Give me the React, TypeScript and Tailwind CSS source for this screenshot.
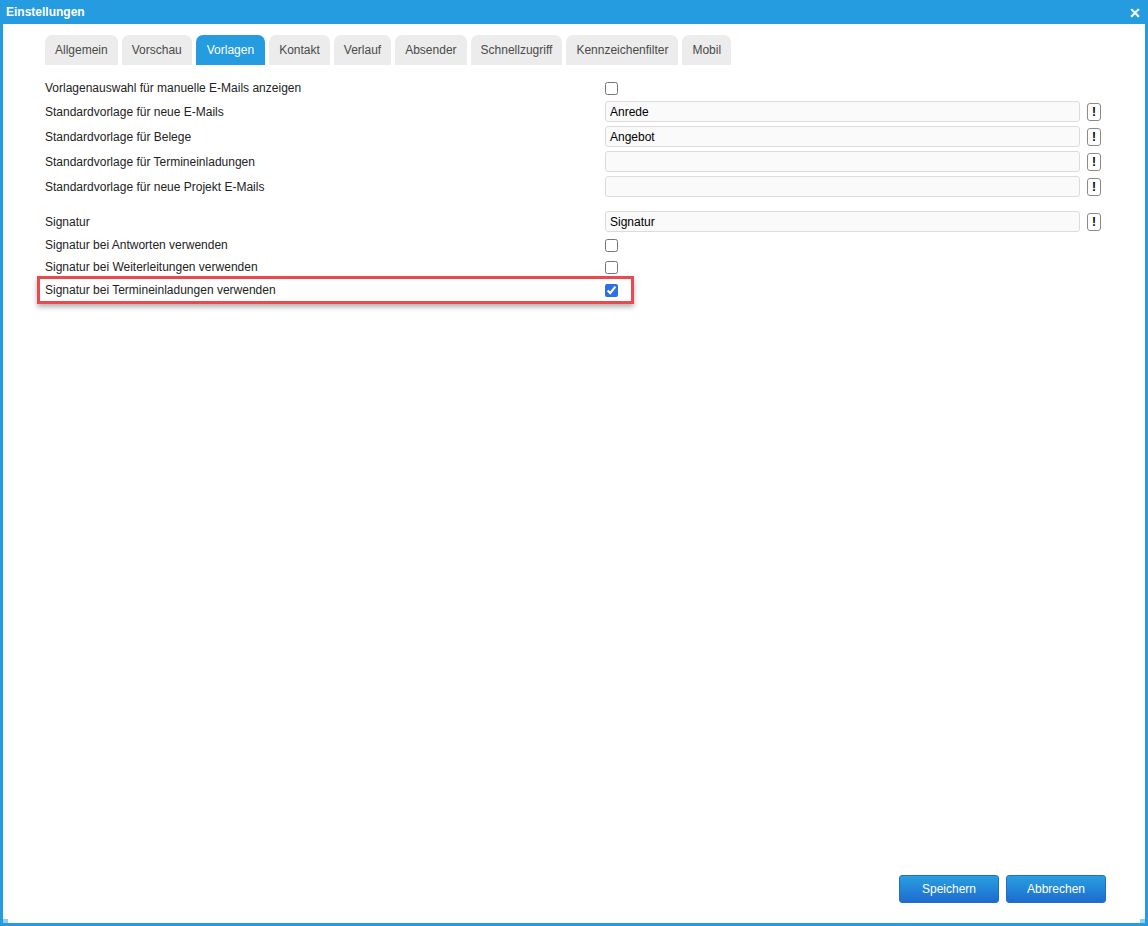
import React from 'react';

const tabs = ['Allgemein', 'Vorschau', 'Vorlagen', 'Kontakt', 'Verlauf', 'Absender', 'Schnellzugriff', 'Kennzeichenfilter', 'Mobil'];

function Check({ checked = false }: { checked?: boolean }) {
  return (
    <input
      type="checkbox"
      readOnly
      checked={checked}
      className="m-0 w-[13px] h-[13px] accent-[#2f6fe4]"
    />
  );
}

function InfoBtn() {
  return (
    <button className="ml-[7px] w-[14px] h-[18px] border border-[#8a8a8a] rounded-[3px] bg-white flex items-center justify-center text-[12px] font-bold text-black leading-none">
      !
    </button>
  );
}

function InputRow({ label, value }: { label: string; value: string }) {
  return (
    <div className="flex items-center h-[25px]">
      <div className="w-[560px]">{label}</div>
      <div className="w-[475px] h-[21px] bg-[#fafafa] border border-[#dcdcdc] rounded-[3px] px-[4px] flex items-center text-black">{value}</div>
      <InfoBtn />
    </div>
  );
}

function CheckRow({ label, checked }: { label: string; checked?: boolean }) {
  return (
    <div className="flex items-center h-[22px]">
      <div className="w-[560px]">{label}</div>
      <Check checked={checked} />
    </div>
  );
}

export default function App() {
  return (
    <div
      className="relative w-[1148px] h-[926px] bg-white border-x-[3px] border-b-[3px] border-[#259be0] flex flex-col text-[12px] text-[#222]"
      style={{ fontFamily: '"Liberation Sans", Arial, sans-serif' }}
    >
      <div className="h-[24px] -mx-[3px] bg-[#259be0] flex items-center justify-between px-[6px] text-white">
        <span className="font-bold text-[12px]">Einstellungen</span>
        <span className="font-bold text-[14px] leading-none mr-[1px] mt-[2px]">✕</span>
      </div>

      <div className="flex-1 flex flex-col pl-[42px]">
        <div className="flex gap-[4px] mt-[11px] h-[30px]">
          {tabs.map((t) => (
            <div
              key={t}
              className={
                t === 'Vorlagen'
                  ? 'px-[11px] flex items-center rounded-t-[7px] bg-[#259be0] text-white'
                  : 'px-[10px] flex items-center rounded-t-[7px] bg-[#ececec] text-[#4a4a4a]'
              }
            >
              {t}
            </div>
          ))}
        </div>

        <div className="mt-[12px] flex flex-col">
          <CheckRow label="Vorlagenauswahl für manuelle E-Mails anzeigen" />
          <InputRow label="Standardvorlage für neue E-Mails" value="Anrede" />
          <InputRow label="Standardvorlage für Belege" value="Angebot" />
          <InputRow label="Standardvorlage für Termineinladungen" value="" />
          <InputRow label="Standardvorlage für neue Projekt E-Mails" value="" />
          <div className="h-[10px]" />
          <InputRow label="Signatur" value="Signatur" />
          <CheckRow label="Signatur bei Antworten verwenden" />
          <CheckRow label="Signatur bei Weiterleitungen verwenden" />
          <div className="-ml-[8px] -mt-[2px] w-[597px] h-[28px] pl-[5px] border-[3px] border-[#e94a50] shadow-[0_3px_5px_rgba(0,0,0,0.3)] flex items-center">
            <div className="w-[560px]">Signatur bei Termineinladungen verwenden</div>
            <Check checked />
          </div>
        </div>

        <div className="mt-auto mb-[20px] mr-[39px] flex justify-end gap-[7px]">
          <button className="w-[100px] h-[28px] rounded-[3px] border border-[#1f6fc5] bg-gradient-to-b from-[#2a9fe0] to-[#1f6bcf] text-white text-[12px]">
            Speichern
          </button>
          <button className="w-[100px] h-[28px] rounded-[3px] border border-[#1f6fc5] bg-gradient-to-b from-[#2a9fe0] to-[#1f6bcf] text-white text-[12px]">
            Abbrechen
          </button>
        </div>
      </div>

      <div className="absolute left-0 bottom-0 w-[5px] h-[4px] bg-[#8fd0f2]" />
      <div className="absolute right-0 bottom-0 w-[5px] h-[4px] bg-[#8fd0f2]" />
    </div>
  );
}
